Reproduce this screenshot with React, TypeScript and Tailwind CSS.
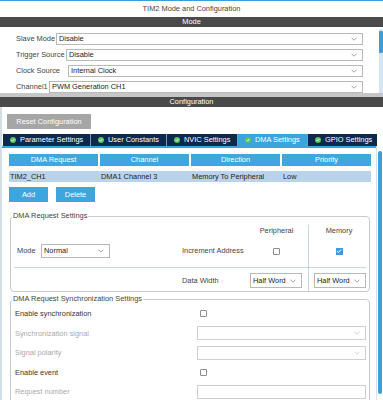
import React from "react";

function Chevron({ color = "#8a8a8a" }: { color?: string }) {
  return (
    <svg width="6" height="4" viewBox="0 0 6 4">
      <path d="M0.5 0.7 L3 3.2 L5.5 0.7" fill="none" stroke={color} strokeWidth="0.8" />
    </svg>
  );
}

function TabCheck() {
  return (
    <svg width="6" height="6" viewBox="0 0 6 6" className="shrink-0">
      <circle cx="3" cy="3" r="3" fill="#5cc45f" />
      <path d="M1.6 3.1 L2.6 4.1 L4.4 2" fill="none" stroke="#ffffff" strokeWidth="0.9" />
    </svg>
  );
}

function Select({
  value,
  className,
  disabled,
}: {
  value?: string;
  className: string;
  disabled?: boolean;
}) {
  return (
    <div
      className={`flex items-center justify-between border bg-white pl-[2px] pr-[5px] ${
        disabled ? "border-[#cfcfcf]" : "border-[#b9b9b9]"
      } ${className}`}
    >
      <span className="text-[#222]">{value}</span>
      <Chevron color={disabled ? "#c4c4c4" : "#8a8a8a"} />
    </div>
  );
}

function Checkbox({ checked }: { checked?: boolean }) {
  if (checked) {
    return (
      <div className="w-[7px] h-[7px] bg-[#3a9fe0] flex items-center justify-center">
        <svg width="6" height="6" viewBox="0 0 6 6">
          <path d="M1 3.1 L2.4 4.5 L5 1.6" fill="none" stroke="#ffffff" strokeWidth="1" />
        </svg>
      </div>
    );
  }
  return <div className="w-[7px] h-[7px] border border-[#8c8c8c] rounded-[1px] bg-white" />;
}

const modeRows = [
  { label: "Slave Mode", value: "Disable", w: "w-[40px]" },
  { label: "Trigger Source", value: "Disable", w: "w-[50px]" },
  { label: "Clock Source", value: "Internal Clock", w: "w-[52px]" },
  { label: "Channel1", value: "PWM Generation CH1", w: "w-[33px]" },
];

const tabs = [
  { label: "Parameter Settings", w: "w-[87px]", active: false },
  { label: "User Constants", w: "w-[75px]", active: false },
  { label: "NVIC Settings", w: "w-[70px]", active: false },
  { label: "DMA Settings", w: "w-[69px]", active: true },
  { label: "GPIO Settings", w: "w-[69px]", active: false },
];

const columns = ["DMA Request", "Channel", "Direction", "Priority"];
const row = ["TIM2_CH1", "DMA1 Channel 3", "Memory To Peripheral", "Low"];

export default function App() {
  return (
    <div className="w-[383px] h-[400px] overflow-hidden bg-white text-[7.4px] text-[#444] font-['Liberation_Sans',Arial,sans-serif]">
      <div className="h-[1px] bg-[#3a9fd9]" />
      <div className="h-[16px] leading-[16px] text-center text-[#444]">
        TIM2 Mode and Configuration
      </div>
      <div className="h-[10px] leading-[10px] bg-[#4a4a4a] text-white text-center">Mode</div>

      {/* Mode panel */}
      <div className="h-[66px] flex">
        <div className="flex-1 pt-[6px] pl-[16px] pr-[16px] flex flex-col gap-[4px]">
          {modeRows.map((r) => (
            <div key={r.label} className="flex items-center h-[12px]">
              <span className={`${r.w} shrink-0 text-[#444]`}>{r.label}</span>
              <Select value={r.value} className="flex-1 h-[12px]" />
            </div>
          ))}
        </div>
        <div className="w-[4px] mt-[2px] bg-[#d4e5f3] flex flex-col">
          <div className="h-[22px] mt-[2px] bg-[#3d9bd6] rounded-[1px]" />
        </div>
      </div>

      <div className="h-[4px] bg-[#c6c6c6]" />
      <div className="h-[10px] leading-[10px] bg-[#4a4a4a] text-white text-center">
        Configuration
      </div>

      {/* Configuration panel */}
      <div className="border-l-2 border-[#d3dde7] h-[293px]">
        <div className="pt-[7px] pl-[5px]">
          <div className="w-[84px] h-[15px] bg-[#a6a6a6] text-white flex items-center justify-center">
            Reset Configuration
          </div>
        </div>

        <div className="mt-[5px] ml-[1px] flex gap-px bg-[#8597ad] w-max h-[12px]">
          {tabs.map((t) => (
            <div
              key={t.label}
              className={`${t.w} flex items-center gap-[4px] pl-[7px] text-white ${
                t.active ? "bg-[#3ca4dd]" : "bg-[#0d2a4e]"
              }`}
            >
              <TabCheck />
              <span>{t.label}</span>
            </div>
          ))}
        </div>

        <div className="flex">
          <div className="w-[374px]">
            <div className="h-[2px] bg-[#3ca4dd]" />

            {/* DMA table */}
            <div className="mt-[6px] ml-[7px] flex gap-[2px]">
              {columns.map((c) => (
                <div
                  key={c}
                  className="w-[89px] h-[12px] bg-[#3fa7dd] text-white flex items-center justify-center"
                >
                  {c}
                </div>
              ))}
            </div>
            <div className="mt-[5px] ml-[7px] w-[362px] h-[11px] bg-[#bad2ea] flex gap-[2px] text-[#222]">
              {row.map((c) => (
                <div key={c} className="w-[89px] pl-[1px] flex items-center">
                  {c}
                </div>
              ))}
            </div>

            <div className="mt-[5px] ml-[7px] flex gap-[8px]">
              <div className="w-[39px] h-[15px] bg-[#3ea6dc] text-white flex items-center justify-center">
                Add
              </div>
              <div className="w-[39px] h-[15px] bg-[#3ea6dc] text-white flex items-center justify-center">
                Delete
              </div>
            </div>

            {/* DMA Request Settings */}
            <fieldset className="mt-[9px] ml-[8px] w-[360px] h-[81px] border border-[#c9c9c9] rounded-[4px]">
              <legend className="ml-[1px] px-[1px] leading-[10px] text-[#444]">
                DMA Request Settings
              </legend>
              <div className="flex">
                <div className="w-[234px] flex flex-col">
                  <div className="h-[20px]" />
                  <div className="h-[20px] flex items-center pl-[6px]">
                    <span className="w-[24px]">Mode</span>
                    <Select value="Normal" className="w-[69px] h-[14px]" />
                    <span className="ml-[72px]">Increment Address</span>
                  </div>
                  <div className="mt-[6px] ml-[3px] h-px bg-[#c5d4e6]" />
                  <div className="mt-[5px] h-[15px] pl-[171px] flex items-center">Data Width</div>
                </div>
                <div className="w-[63px] flex flex-col">
                  <div className="h-[20px] flex items-center justify-center">Peripheral</div>
                  <div className="h-[20px] flex items-center justify-center">
                    <Checkbox />
                  </div>
                  <div className="mt-[6px] h-px bg-[#c5d4e6]" />
                  <div className="mt-[5px] h-[15px] pl-[5px] flex">
                    <Select value="Half Word" className="w-[52px] h-[15px]" />
                  </div>
                </div>
                <div className="w-px mt-[4px] h-[66px] bg-[#c5d4e6]" />
                <div className="flex-1 flex flex-col">
                  <div className="h-[20px] flex items-center justify-center">Memory</div>
                  <div className="h-[20px] flex items-center justify-center">
                    <Checkbox checked />
                  </div>
                  <div className="mt-[6px] mr-[3px] h-px bg-[#c5d4e6]" />
                  <div className="mt-[5px] h-[15px] pl-[5px] flex">
                    <Select value="Half Word" className="w-[52px] h-[15px]" />
                  </div>
                </div>
              </div>
            </fieldset>

            {/* DMA Request Synchronization Settings */}
            <fieldset className="mt-[2px] ml-[8px] w-[360px] h-[120px] border border-[#c9c9c9] rounded-[4px]">
              <legend className="ml-[1px] px-[1px] leading-[10px] text-[#444]">
                DMA Request Synchronization Settings
              </legend>
              <div className="flex flex-col">
                <div className="h-[19.5px] flex items-center">
                  <span className="w-[186px] pl-[4px] text-[#333]">Enable synchronization</span>
                  <div className="pl-[3px]">
                    <Checkbox />
                  </div>
                </div>
                <div className="h-[19.5px] flex items-center">
                  <span className="w-[186px] pl-[4px] text-[#a9a9a9]">Synchronization signal</span>
                  <Select disabled className="w-[169px] h-[14px]" />
                </div>
                <div className="h-[19.5px] flex items-center">
                  <span className="w-[186px] pl-[4px] text-[#a9a9a9]">Signal polarity</span>
                  <Select disabled className="w-[169px] h-[14px]" />
                </div>
                <div className="h-[19.5px] flex items-center">
                  <span className="w-[186px] pl-[4px] text-[#333]">Enable event</span>
                  <div className="pl-[3px]">
                    <Checkbox />
                  </div>
                </div>
                <div className="h-[19.5px] flex items-center">
                  <span className="w-[186px] pl-[4px] text-[#a9a9a9]">Request number</span>
                  <div className="w-[169px] h-[14px] border border-[#cfcfcf] bg-white" />
                </div>
              </div>
            </fieldset>
          </div>

          {/* scrollbar */}
          <div className="w-[7px] h-[254px] border-l border-[#d6e0ea] flex justify-center">
            <div className="w-[4px] mt-[5px] mb-[6px] bg-[#3d9fd9] rounded-full" />
          </div>
        </div>
      </div>
    </div>
  );
}
